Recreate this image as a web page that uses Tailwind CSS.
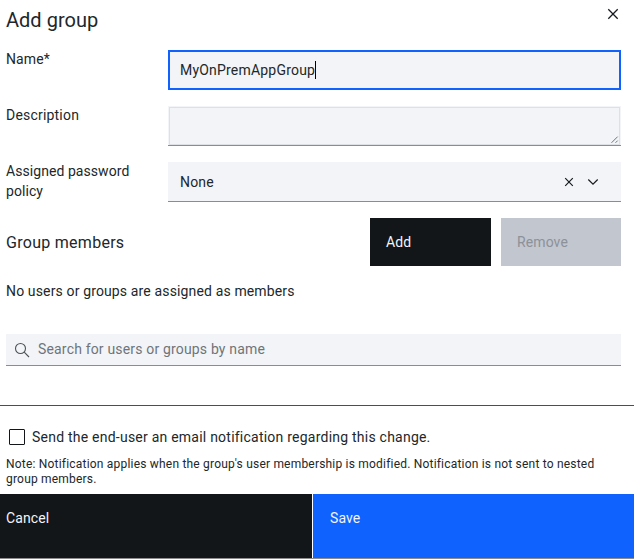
<!DOCTYPE html>
<html lang="en">
<head>
<meta charset="utf-8">
<title>Add group</title>
<script src="https://cdn.jsdelivr.net/npm/@tailwindcss/browser@4"></script>
</head>
<body class="bg-white">
<main class="flex h-[559px] w-[634px] flex-col overflow-hidden font-[Roboto,sans-serif] text-[14px] leading-5 tracking-[0.2px] text-[#21272a]">
  <header class="flex h-[49px] shrink-0 items-start justify-between pl-[6px] pr-[15px]">
    <h1 class="pt-[6px] text-[20px] leading-7 tracking-[0.02px]">Add group</h1>
    <svg class="mt-[8px] h-3 w-3" viewBox="0 0 12 12" fill="none" stroke="#171b1f" stroke-width="1.3"><path d="M1.3 1.3l9.4 9.4M10.7 1.3l-9.4 9.4"/></svg>
  </header>
  <div class="flex h-14 shrink-0 pl-[6px] pr-[13px]">
    <label class="w-[162px] shrink-0 tracking-[0.1px]">Name*</label>
    <div class="mt-px flex h-10 flex-1 items-center border-2 border-[#0f62fe] bg-[#f2f4f8] pl-[10px]"><span>MyOnPremAppGroup</span><i class="h-[18px] w-px bg-black"></i></div>
  </div>
  <div class="flex h-14 shrink-0 pl-[6px] pr-[13px]">
    <label class="w-[162px] shrink-0">Description</label>
    <div class="mt-px flex h-10 flex-1 border-b border-[#878d96] bg-[#f2f4f8] px-px pt-px">
      <div class="flex flex-1 items-end justify-end border border-[#dde1e6]">
        <svg class="h-[9px] w-[9px]" viewBox="0 0 9 9" fill="none" stroke="#4d5358" stroke-width=".8"><path d="M1.5 7.8l6.2-6.2M5.5 7.8l2.2-2.2"/></svg>
      </div>
    </div>
  </div>
  <div class="flex h-[57px] shrink-0 pl-[6px] pr-[13px]">
    <label class="w-[162px] shrink-0 pr-4 tracking-[0.06px]">Assigned password policy</label>
    <div class="mt-px flex h-10 flex-1 items-center border-b border-[#878d96] bg-[#f2f4f8] pl-3 pr-[22px]">
      <span>None</span>
      <svg class="ml-auto h-[10px] w-[10px]" viewBox="0 0 10 10" fill="none" stroke="#171b1f" stroke-width="1.2"><path d="M1.2 1.2l7.6 7.6M8.8 1.2L1.2 8.8"/></svg>
      <svg class="ml-[13px] h-3 w-3" viewBox="0 0 12 12" fill="none" stroke="#171b1f" stroke-width="1.2"><path d="M1.3 3.5L6 8.2l4.7-4.7"/></svg>
    </div>
  </div>
  <section class="flex h-12 shrink-0 items-center gap-[10px] pl-[6px] pr-[13px]">
    <h2 class="flex-1 pt-[2px] text-[16px] tracking-[0.28px]">Group members</h2>
    <button class="h-12 w-[121px] bg-[#121619] pl-4 text-left tracking-[0.1px] text-[#f2f4f8]">Add</button>
    <button class="h-12 w-[120px] bg-[#c1c6cf] pl-4 text-left tracking-[0.1px] text-[#8d9199]">Remove</button>
  </section>
  <p class="mt-[15px] pl-[6px] tracking-[0.14px]">No users or groups are assigned as members</p>
  <div class="ml-[6px] mr-[13px] mt-[33px] flex h-8 shrink-0 items-center border-b border-[#878d96] bg-[#f2f4f8] pl-2">
    <svg class="h-4 w-4" viewBox="0 0 16 16" fill="none" stroke="#4d5358" stroke-width="1.1"><circle cx="6.5" cy="6.5" r="5"/><path d="M10.2 10.2l4.8 4.8"/></svg>
    <span class="mb-[2px] ml-2 tracking-[0.17px] text-[#6f7479]">Search for users or groups by name</span>
  </div>
  <div class="mt-[39px] h-px shrink-0 bg-[#4d4d55]"></div>
  <div class="mt-[21px] flex h-5 shrink-0 items-center pl-[9px]">
    <i class="h-4 w-4 rounded-[1px] border border-[#121619]"></i>
    <span class="ml-[7px] tracking-[0.23px]">Send the end-user an email notification regarding this change.</span>
  </div>
  <p class="mt-[10px] h-[30px] shrink-0 pl-[6px] pr-[13px] text-[12px] leading-[15px]">Note: Notification applies when the group's user membership is modified. Notification is not sent to nested group members.</p>
  <footer class="mt-[7px] flex h-[65px] shrink-0 gap-px border-b border-[#8d8d8d] tracking-[0.1px] text-[#f2f4f8]">
    <button class="flex w-[312px] items-start bg-[#121619] pl-[6px] pt-[14px]">Cancel</button>
    <button class="flex flex-1 items-start bg-[#0f62fe] pl-[17px] pt-[14px]">Save</button>
  </footer>
</main>
</body>
</html>
